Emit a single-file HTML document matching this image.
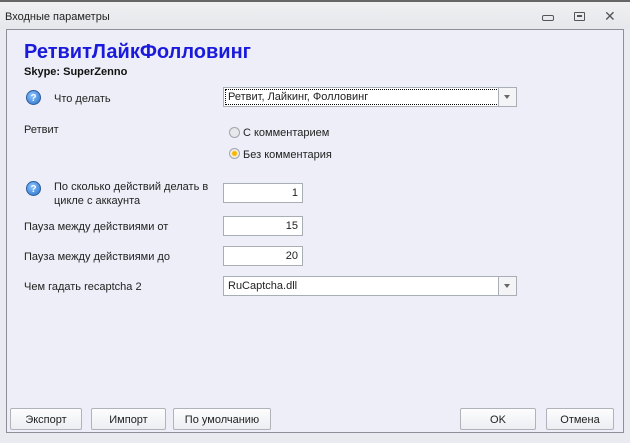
<!DOCTYPE html><html><head><meta charset="utf-8"><style>
body{margin:0;width:630px;height:443px;background:#eaebf0;font-family:"Liberation Sans",sans-serif;font-size:11px;color:#222;position:relative;overflow:hidden}
.a{position:absolute}
.tb{left:0;top:0;width:630px;height:29px;background:linear-gradient(#f0f0f2,#e6e7ec);border-top:2px solid #666;box-sizing:border-box}
.panel{left:6px;top:29px;width:618px;height:404px;background:#edeef7;border:1px solid #8d9099;box-sizing:border-box}
.in{background:#fff;border:1px solid #a9adb5;box-sizing:border-box;height:20px;line-height:18px;padding:0 4px}
.num{width:80px;text-align:right}
.dd{position:absolute;right:0;top:0;width:17px;height:18px;border-left:1px solid #a9adb5;background:#f4f4f6}
.dd:after{content:"";position:absolute;left:5px;top:7px;border:3px solid transparent;border-top:4px solid #666}
.q{width:15px;height:15px;border-radius:50%;background:radial-gradient(circle at 40% 35%,#8cc4ff,#2a6fc9);color:#fff;font-weight:bold;font-size:10px;text-align:center;line-height:15px;border:1px solid #2a5a9e;box-sizing:border-box}
.rb{width:11px;height:11px;border-radius:50%;border:1px solid #a0a4ab;background:#e8e8ea;box-sizing:border-box}
.btn{top:408px;height:22px;border:1px solid #b0b3ba;border-radius:2px;background:linear-gradient(#fdfdfe,#eceef2);box-sizing:border-box;text-align:center;line-height:22px}
</style></head><body>
<div class="a tb"></div>
<div class="a" style="left:5px;top:11px">Входные параметры</div>
<div class="a" style="left:542px;top:15px;width:10px;height:4px;border:1px solid #555;border-radius:2px"></div>
<div class="a" style="left:574px;top:12px;width:9px;height:7px;border:1px solid #555;border-radius:1px"><div style="margin:2px 2px;height:2px;border:1px solid #555;box-sizing:border-box"></div></div>
<div class="a" style="left:604px;top:8px;font-size:14px;color:#555">✕</div>
<div class="a panel"></div>
<div class="a" style="left:24px;top:41px;font-size:20px;font-weight:bold;color:#1a1adc">РетвитЛайкФолловинг</div>
<div class="a" style="left:24px;top:66px;font-weight:bold;color:#111">Skype: SuperZenno</div>
<div class="a q" style="left:26px;top:90px">?</div>
<div class="a" style="left:54px;top:93px">Что делать</div>
<div class="a in" style="left:223px;top:87px;width:294px;outline:1px dotted #000;outline-offset:-3px">Ретвит, Лайкинг, Фолловинг<div class="dd"></div></div>
<div class="a" style="left:24px;top:124px">Ретвит</div>
<div class="a rb" style="left:229px;top:127px"></div>
<div class="a" style="left:243px;top:127px">С комментарием</div>
<div class="a rb" style="left:229px;top:148px;background:radial-gradient(#f7b500 30%,#fde9b0 45%,#eee 60%)"></div>
<div class="a" style="left:243px;top:149px">Без комментария</div>
<div class="a q" style="left:26px;top:181px">?</div>
<div class="a" style="left:54px;top:180px;line-height:14px">По сколько действий делать в<br>цикле с аккаунта</div>
<div class="a in num" style="left:223px;top:183px;line-height:19px">1</div>
<div class="a" style="left:24px;top:221px">Пауза между действиями от</div>
<div class="a in num" style="left:223px;top:216px;line-height:19px">15</div>
<div class="a" style="left:24px;top:251px">Пауза между действиями до</div>
<div class="a in num" style="left:223px;top:246px;line-height:19px">20</div>
<div class="a" style="left:24px;top:281px">Чем гадать recaptcha 2</div>
<div class="a in" style="left:223px;top:276px;width:294px;line-height:19px">RuCaptcha.dll<div class="dd"></div></div>
<div class="a btn" style="left:10px;width:72px">Экспорт</div>
<div class="a btn" style="left:91px;width:75px">Импорт</div>
<div class="a btn" style="left:173px;width:98px">По умолчанию</div>
<div class="a btn" style="left:460px;width:76px">OK</div>
<div class="a btn" style="left:546px;width:68px">Отмена</div>
</body></html>
